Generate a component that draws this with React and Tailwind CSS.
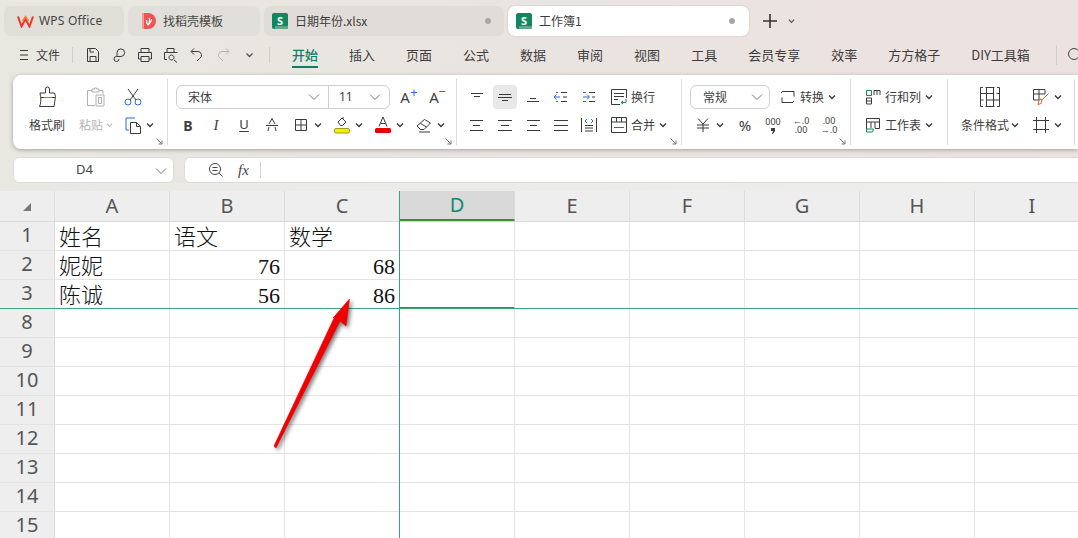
import React from "react";

const D = "#3a3a3a";
const Svg = ({ w = 16, h = 16, vb, children, className = "" }) => (
  <svg width={w} height={h} viewBox={vb || `0 0 ${w} ${h}`} fill="none" stroke={D} strokeWidth="1" className={`shrink-0 ${className}`}>
    {children}
  </svg>
);
const Chev = ({ c = D, w = 8 }) => (
  <svg width={w} height="6" viewBox="0 0 8 6" fill="none" stroke={c} strokeWidth="1.4" className="shrink-0"><path d="M1 1.5 4 4.5 7 1.5" /></svg>
);
const ChevThin = () => (
  <svg width="12" height="8" viewBox="0 0 12 8" fill="none" stroke="#777" strokeWidth="1" className="shrink-0"><path d="M1 1.5 6 6.5 11 1.5" /></svg>
);
const Launcher = ({ c }) => (
  <svg width="7" height="7" viewBox="0 0 7 7" fill="none" stroke="#777" strokeWidth="1" className={`absolute bottom-[4px] ${c}`}><path d="M.5.5 6 6M6 2.5V6H2.5" /></svg>
);
const Divider = () => <div className="w-px bg-[#dcdcdc] my-[4px] shrink-0" />;

const Slot = ({ children, c = "w-[28px]" }) => <div className={`flex items-center justify-center h-[24px] shrink-0 ${c}`}>{children}</div>;
const IC = ({ children }) => <div className="flex items-center gap-[5px] h-[24px] shrink-0">{children}<Chev /></div>;
const Align = ({ rows }) => (
  <Svg>{rows.map(([a, b, y]) => <path key={y} d={`M${a} ${y}.5H${b}`} />)}</Svg>
);
const Row = ({ children, c = "" }) => <div className={`flex items-center h-[24px] whitespace-nowrap ${c}`}>{children}</div>;

const SheetTab = ({ title, active }) => (
  <div className={`relative flex items-center h-[30px] rounded-[7px] pl-[8px] shrink-0 ${active ? "w-[241px] bg-white shadow-[0_0_2px_rgba(0,0,0,0.2)]" : "w-[240px] bg-[#e2dcd8]"}`}>
    <div className="relative w-[16px] h-[16px] rounded-[2px] bg-[#12875f] text-white text-[11px] font-bold flex items-center justify-center overflow-hidden font-['Noto_Sans',sans-serif]">
      S<div className="absolute left-[3px] right-0 bottom-0 h-[3px] bg-[#5aa98c]" />
    </div>
    <span className="ml-[7px] text-[12px] text-[#3d3d3d]">{title}</span>
    <div className={`absolute top-[12px] w-[6px] h-[6px] rounded-full bg-[#a6a6a6] ${active ? "right-[14px]" : "right-[13px]"}`} />
  </div>
);

const menus = ["插入", "页面", "公式", "数据", "审阅", "视图", "工具", "会员专享", "效率", "方方格子", "DIY工具箱"];
const cols = ["A", "B", "C", "D", "E", "F", "G", "H", "I"];
const rows = [
  ["1", "姓名", "语文", "数学"],
  ["2", "妮妮", "76", "68"],
  ["3", "陈诚", "56", "86"],
  ["8"], ["9"], ["10"], ["11"], ["12"], ["13"], ["14"], ["15"],
];

export default function App() {
  return (
    <div className="relative w-[1078px] h-[538px] overflow-hidden bg-gradient-to-r from-[#e8e8e1] via-[#eae4e0] to-[#ece2e0] text-[#333] font-['Noto_Sans_CJK_SC','Noto_Sans',sans-serif]">
      {/* tabs */}
      <div className="flex items-center gap-[4px] pl-[4px] pt-[6px] h-[36px]">
        <div className="flex items-center w-[120px] h-[30px] rounded-[7px] bg-[#dfdfd8] pl-[13px] shrink-0">
          <svg width="17" height="13" viewBox="0 0 17 13" fill="none" className="shrink-0"><path d="M1 1.500 4.500 11.500 8.500 4 12.500 11.500 16 1.500" stroke="#f0342a" strokeWidth="2" /><path d="M5.500 6 8.500 1.500 11.500 6" stroke="#fb7a2c" strokeWidth="1.500" /></svg>
          <span className="ml-[5px] text-[12px] text-[#444] font-['Noto_Sans',sans-serif] tracking-[0.2px]">WPS Office</span>
        </div>
        <div className="flex items-center w-[132px] h-[30px] rounded-[7px] bg-[#e0dfd9] pl-[14px] shrink-0">
          <svg width="14" height="16" viewBox="0 0 14 16" className="shrink-0"><path d="M0 0h6a8 8 0 0 1 0 16H0z" fill="#ef5454" /><path d="M0 0h2v16H0z" fill="#f59a8e" /><path d="M7 5c1 2 1 4-1 7M9.500 6C9.500 8 8 10 6 12M4.500 7C4.500 9 5 11 6 12" stroke="#fff" strokeWidth="1.200" fill="none" /></svg>
          <span className="ml-[7px] text-[12px] text-[#444]">找稻壳模板</span>
        </div>
        <SheetTab title="日期年份.xlsx" />
        <SheetTab title="工作簿1" active />
        <svg width="16" height="16" viewBox="0 0 16 16" stroke="#333" strokeWidth="1.600" className="ml-[9px] shrink-0"><path d="M1 8h14M8 1v14" /></svg>
        <div className="ml-[6px]"><Chev c="#555" w={7} /></div>
      </div>

      {/* menu */}
      <div className="flex items-center h-[39px] pb-[1px] text-[13px] text-[#3d3d3d] whitespace-nowrap">
        <Svg w={10} h={12} className="ml-[19px]"><path d="M1 1.500h8M1 6h8M1 10.500h8" /></Svg>
        <span className="ml-[7px] text-[12px] shrink-0">文件</span>
        <div className="ml-[12px] w-px h-[16px] bg-[#cfcfc9] shrink-0" />
        <div className="flex items-center shrink-0">
          <Slot c="w-[26px] ml-[7px]"><Svg><path d="M2.500 1.500h8l3 3v10h-11zM5 14v-4.500h6V14M5 1.500V5h4" /></Svg></Slot>
          <Slot c="w-[26px]"><Svg><path d="M6 9V5.500a3.800 3.800 0 1 1 4 4H5.500a2.500 2.500 0 1 0 2.500 2.500" /></Svg></Slot>
          <Slot c="w-[26px]"><Svg><path d="M4 5V1.500h8V5M4 12H1.500V5.500h13V12H12M4 9.500h8v5H4z" /></Svg></Slot>
          <Slot c="w-[26px]"><Svg><path d="M4 5V1.500h7V5M4 12.500H1.500v-7h13M8.500 8a2.500 2.500 0 1 0 .01 0zM11 13l3 2.500" /></Svg></Slot>
          <Slot c="w-[26px]"><Svg><path d="M5 1.500 2 4.500l3 3M2.500 4.500H9a3.700 3.700 0 0 1 1.500 7L8 14" /></Svg></Slot>
          <Slot c="w-[26px]"><Svg className="opacity-30"><path d="M11 1.500l3 3-3 3M13.500 4.500H7a3.700 3.700 0 0 0-1.500 7L8 14" /></Svg></Slot>
          <Slot c="w-[26px]"><Chev c="#555" w={9} /></Slot>
        </div>
        <div className="ml-[7px] w-px h-[16px] bg-[#cfcfc9] shrink-0" />
        <div className="ml-[22px] relative text-[#0f7d69] font-medium shrink-0">
          开始
          <div className="absolute left-0 right-0 -bottom-[3px] h-[2px] bg-[#0f7d69]" />
        </div>
        <div className="flex ml-[31px] gap-[31px] shrink-0">
          {menus.map((m) => <span key={m}>{m}</span>)}
        </div>
        <div className="ml-[26px] w-px h-[20px] bg-[#cfcfc9] shrink-0" />
        <svg width="16" height="16" viewBox="0 0 16 16" fill="none" stroke="#444" className="ml-[10px] shrink-0"><circle cx="7" cy="7" r="5.500" /></svg>
      </div>

      {/* ribbon */}
      <div className="flex ml-[13px] h-[74px] rounded-l-[8px] bg-white shadow-[0_1px_4px_rgba(0,0,0,0.3)] text-[12px] text-[#3d3d3d]">
        {/* clipboard */}
        <div className="relative w-[154px] shrink-0 flex pt-[10px] pl-[13px]">
          <div className="w-[42px] flex flex-col items-center gap-[4px]">
            <Slot c="w-[42px]"><Svg w={20} h={22}><path d="M8.500 7V3a2 2 0 0 1 4 0V7H17.500l1 3.500-1.500 10H2.500c1.500-3 1.500-7 1-10L3 7z" /><path d="M4 11.500h14" /><path d="M7 11.500h8" stroke="#d9622b" /></Svg></Slot>
            <Row>格式刷</Row>
          </div>
          <div className="ml-[8px] w-[40px] flex flex-col items-center gap-[4px] text-[#b5b5b5]">
            <Slot c="w-[40px]"><Svg w={20} h={20} className="opacity-40"><path d="M6 3.500H1.500v15H9M13 3.500h4V7M6 5V2h2.500V1h2v1H13v3zM10 8h8v11h-8zM12.500 10.500h3v6h-3z" /></Svg></Slot>
            <Row c="gap-[3px]">粘贴<Chev c="#bbb" w={7} /></Row>
          </div>
          <div className="ml-[6px] w-[34px] flex flex-col gap-[4px]">
            <Slot c="w-[20px] ml-[1px]"><Svg w={18} h={18}><path d="M4 1 12 12M14 1 6 12" /><circle cx="4" cy="14" r="3" stroke="#2f66d8" /><circle cx="14" cy="14" r="3" stroke="#2f66d8" /></Svg></Slot>
            <div className="flex items-center gap-[4px] h-[24px] ml-[3px]">
              <Svg w={17} h={17}><path d="M10 1H1v12h3" stroke="#2f66d8" /><path d="M5.500 5.500h6l4 4v7h-10zM11.500 5.500v4h4" /></Svg>
              <Chev />
            </div>
          </div>
          <Launcher c="right-[4px]" />
        </div>
        <Divider />
        {/* font */}
        <div className="relative w-[288px] shrink-0 pt-[10px] flex flex-col gap-[4px]">
          <Row c="pl-[8px]">
            <div className="flex w-[214px] h-[24px] rounded-[6px] border border-[#cfcfcf] shrink-0">
              <div className="flex items-center justify-between w-[152px] pl-[11px] pr-[8px] border-r border-[#cfcfcf]">宋体<ChevThin /></div>
              <div className="flex items-center justify-between flex-1 pl-[10px] pr-[8px] font-['Noto_Sans',sans-serif]">11<ChevThin /></div>
            </div>
            <Slot c="w-[29px] ml-[3px]"><span className="relative text-[15px] font-['Noto_Sans',sans-serif] pr-[5px]">A<span className="absolute -top-[3px] right-[-3px] text-[13px] text-[#2f66d8]">+</span></span></Slot>
            <Slot c="w-[29px]"><span className="relative text-[15px] font-['Noto_Sans',sans-serif] pr-[5px]">A<span className="absolute -top-[4px] right-[-2px] text-[13px] text-[#2f66d8]">−</span></span></Slot>
          </Row>
          <Row c="pl-[6px]">
            <Slot><span className="font-['Noto_Sans',sans-serif] font-bold text-[14px]">B</span></Slot>
            <Slot><span className="font-['Liberation_Serif',serif] italic text-[15px]">I</span></Slot>
            <Slot><span className="font-['Noto_Sans',sans-serif] text-[13px] underline underline-offset-2">U</span></Slot>
            <Slot><Svg><path d="M5 7 8 1.500 11 7M2 8.500h12M5 10l-1 4M11 10l1 4" /></Svg></Slot>
            <div className="ml-[7px] flex gap-[12px]">
              <IC><Svg><path d="M2.500 2.500h11v11h-11zM8 2.500v11M2.500 8h11" /></Svg></IC>
              <IC>
                <svg width="16" height="18" viewBox="0 0 16 18" fill="none" stroke={D} className="shrink-0"><path d="M4 6 8 2l4 4-3.500 3.500h-2z" /><path d="M9 3V1" /><rect x=".5" y="12.500" width="15" height="4.500" rx="1.500" fill="#f4f000" stroke="#9aa020" /></svg>
              </IC>
              <IC>
                <svg width="16" height="18" viewBox="0 0 16 18" fill="none" stroke={D} className="shrink-0"><path d="M4 10.500 8 1l4 9.500M5.500 7.500h5" /><rect x="0" y="12" width="16" height="5" rx="1.500" fill="#ee0000" stroke="none" /></svg>
              </IC>
              <IC>
                <svg width="16" height="16" viewBox="0 0 16 16" fill="none" stroke={D} className="shrink-0"><path d="M1 9 8.500 2.500l6 3.500L8 12.500H4.500zM4.500 6.500 10.500 10M3 15h11" /></svg>
              </IC>
            </div>
          </Row>
          <Launcher c="right-[4px]" />
        </div>
        <Divider />
        {/* alignment */}
        <div className="relative w-[224px] shrink-0 pt-[10px] pl-[6px] flex flex-col gap-[4px]">
          <Row>
            <Slot><Align rows={[[2, 14, 4], [5, 11, 7]]} /></Slot>
            <Slot><div className="w-[24px] h-[24px] rounded-[4px] bg-[#e8e8e8] flex items-center justify-center"><Align rows={[[2, 14, 5], [1, 15, 8], [5, 11, 11]]} /></div></Slot>
            <Slot><Align rows={[[5, 11, 9], [2, 14, 12]]} /></Slot>
            <Slot><Svg><path d="M1 8h6M3.500 5.500 1 8l2.500 2.500M3 3.500h2M3 12.500h2" stroke="#2f66d8" /><path d="M8 3.500h6M8 12.500h6M10 8h4" /></Svg></Slot>
            <Slot><Svg><path d="M2 8h6M6 5.500 8.500 8 6 10.500M2 3.500h3M2 12.500h3" stroke="#2f66d8" /><path d="M8 3.500h6M8 12.500h6M11 8h3" /></Svg></Slot>
            <div className="ml-[8px]">
              <svg width="16" height="16" viewBox="0 0 16 16" fill="none" stroke={D} className="shrink-0"><path d="M15.500 9V.5H.5v15H9M3 4.500h10M3 7.500h10M3 10.500h4" /><path d="M15 10v3.500h-4.500M12 12l-2 1.500L12 15" stroke="#12875f" /></svg>
            </div>
            <span className="ml-[4px]">换行</span>
          </Row>
          <Row>
            <Slot><Align rows={[[1, 14, 3], [4, 11, 8], [1, 14, 13]]} /></Slot>
            <Slot><Align rows={[[1, 15, 3], [4, 12, 8], [1, 15, 13]]} /></Slot>
            <Slot><Align rows={[[2, 15, 3], [5, 12, 8], [2, 15, 13]]} /></Slot>
            <Slot><Align rows={[[1, 15, 3], [1, 15, 8], [1, 15, 13]]} /></Slot>
            <Slot><Svg><path d="M.5 1v14M15.500 1v14M4 8.500h8M4 11h8M4 14h8" /><path d="M6 2 4 4l2 2M10 2l2 2-2 2" stroke="#2f66d8" /></Svg></Slot>
            <div className="ml-[8px]">
              <svg width="16" height="16" viewBox="0 0 16 16" fill="none" stroke={D} className="shrink-0"><path d="M.5.500h15v15H.5zM.5 5h15M5.500.500V5M10.500.500V5" /><path d="M3 10.500h10" stroke="#12875f" /></svg>
            </div>
            <span className="ml-[4px]">合并</span>
            <div className="ml-[4px]"><Chev /></div>
          </Row>
          <Launcher c="right-[4px]" />
        </div>
        <Divider />
        {/* number */}
        <div className="relative w-[168px] shrink-0 pt-[10px] flex flex-col gap-[4px]">
          <Row c="pl-[8px]">
            <div className="flex items-center justify-between w-[80px] h-[24px] rounded-[6px] border border-[#cfcfcf] pl-[12px] pr-[6px] shrink-0">常规<ChevThin /></div>
            <div className="ml-[10px]"><Svg><path d="M3 2.500h11v5M13 13.500H2v-5M1 4l2-2M14 12l-2 2" /></Svg></div>
            <span className="ml-[4px]">转换</span>
            <div className="ml-[4px]"><Chev /></div>
          </Row>
          <Row c="pl-[13px]">
            <IC><Svg><path d="M3 1.500 8 7l5-5.500M2 8h12M2 11h12M8 7v8" /></Svg></IC>
            <div className="ml-[7px] flex">
              <Slot><span className="text-[15px] font-['Noto_Sans',sans-serif]">%</span></Slot>
              <Slot>
                <div className="flex flex-col items-center">
                  <span className="text-[9px] leading-[10px] font-['Noto_Sans',sans-serif]">000</span>
                  <svg width="4" height="6" viewBox="0 0 4 6" className="mt-[1px] shrink-0"><path d="M0 0h4v3L2 6H1l1-3H0z" fill={D} /></svg>
                </div>
              </Slot>
              <Slot><span className="whitespace-pre text-center text-[9px] leading-[9px] font-['Noto_Sans',sans-serif]">{"←.0\n.00"}</span></Slot>
              <Slot><span className="whitespace-pre text-center text-[9px] leading-[9px] font-['Noto_Sans',sans-serif]">{".00\n→.0"}</span></Slot>
            </div>
          </Row>
          <Launcher c="right-[4px]" />
        </div>
        <Divider />
        {/* rows cols */}
        <div className="w-[96px] shrink-0 pt-[10px] pl-[14px] flex flex-col gap-[4px]">
          <Row>
            <Svg><path d="M1.500 1.500h5v5h-5z" stroke="#12875f" /><path d="M1.500 9h5v6h-5zM1.500 12h5M9 6V1.500h6V6M12 1.500V6" /></Svg>
            <span className="ml-[4px]">行和列</span>
            <div className="ml-[4px]"><Chev /></div>
          </Row>
          <Row>
            <Svg><path d="M1.500 12V1.500h13v10H10M1.500 5h13M6 5v6M10 5v6" /><path d="M1.500 12h7l-1 3h-6z" stroke="#12875f" /></Svg>
            <span className="ml-[4px]">工作表</span>
            <div className="ml-[4px]"><Chev /></div>
          </Row>
        </div>
        <Divider />
        {/* styles */}
        <div className="w-[126px] shrink-0 pt-[10px] pl-[13px] flex">
          <div className="w-[58px] flex flex-col items-center gap-[4px]">
            <Slot c="w-[58px]"><Svg w={20} h={20}><path d="M3 .5H.5v19H3M17 .5h2.500v19H17M5.500 .5h9M5.500 19.500h9M.5 6.500h13M6.500 13h13M.5 13h3M16.500 6.500h3M6.500 .5v19M13.500 .5v19" /></Svg></Slot>
            <Row>条件格式<div className="ml-[2px]"><Chev /></div></Row>
          </div>
          <div className="ml-[14px] flex flex-col gap-[4px]">
            <IC>
              <svg width="16" height="17" viewBox="0 0 16 17" fill="none" stroke={D} className="shrink-0"><path d="M6 11H.5V.5H12V5M.5 5H12M6 .5V11" /><path d="M15.500 4.500 9 11l-1.500-1M9 11l-1 3.500-3 1 1-4 2-1.500" stroke="#d9622b" /></svg>
            </IC>
            <IC><Svg><path d="M3.500 0v16M12.500 0v16M0 3.500h16M0 12.500h16" /></Svg></IC>
          </div>
        </div>
        <Divider />
      </div>

      {/* formula bar */}
      <div className="flex gap-[10px] ml-[13px] mt-[8px] h-[26px]">
        <div className="relative w-[161px] rounded-[6px] bg-white border border-[#dcdcdc] flex items-center justify-center text-[13px] font-['Noto_Sans',sans-serif] pr-[18px] text-[#444]">
          D4
          <div className="absolute right-[6px] top-[9px]"><ChevThin /></div>
        </div>
        <div className="flex-1 rounded-l-[6px] bg-white border border-r-0 border-[#dcdcdc] flex items-center">
          <svg width="16" height="16" viewBox="0 0 16 16" fill="none" stroke="#444" className="ml-[23px] shrink-0"><circle cx="7" cy="7" r="5.500" /><path d="M4.500 8.500h5M4.500 5.500h5M11 11l3.500 3.500" /></svg>
          <span className="ml-[14px] font-['Liberation_Serif',serif] italic text-[15px] text-[#444]">fx</span>
          <div className="ml-[11px] w-px h-[16px] bg-[#d5d5d5]" />
        </div>
      </div>

      {/* grid */}
      <div className="pt-[8px] bg-gradient-to-r from-[#e9e9e4] to-[#eeeeee]">
        <div className="bg-white">
          <div className="flex h-[31px] bg-[#eeeeee] border-b border-[#dadada] font-['Noto_Sans',sans-serif] text-[20px] text-[#555]">
            <div className="w-[55px] shrink-0 border-r border-[#e0e0e0] flex items-center justify-center pt-[2px]">
              <svg width="10" height="10" viewBox="0 0 10 10" className="shrink-0"><path d="M9 1v8H1z" fill="#777" /></svg>
            </div>
            {cols.map((c) => (
              <div key={c} className={`relative w-[115px] shrink-0 flex items-center justify-center border-r border-[#dcdcdc] ${c === "D" ? "bg-[#d9d9d9] text-[#0f8a72] border-b-2 border-b-[#3c8f2c]" : ""}`}>{c}</div>
            ))}
          </div>
          {rows.map((r, i) => (
            <div key={r[0]} className="flex h-[29px] border-b border-[#e3e3e3]">
              <div className="w-[55px] shrink-0 bg-[#eeeeee] border-r border-[#d9d9d9] flex items-center justify-center font-['Noto_Sans',sans-serif] text-[20px] text-[#555] pb-[2px]">{r[0]}</div>
              {cols.map((c, j) => {
                const v = r[j + 1];
                const num = v && /^\d+$/.test(v);
                return (
                  <div key={c} className={`w-[115px] shrink-0 border-r border-[#e6e6e6] flex items-center h-[29px] pt-[2px] font-['Liberation_Serif','Noto_Sans_CJK_SC',serif] text-[22px] font-light text-[#111] ${num ? "justify-end pr-[4px]" : "pl-[4px]"} ${c === "D" && i === 2 ? "border-b-2 border-b-[#3c8f2c]" : ""}`}>{v}</div>
                );
              })}
            </div>
          ))}
        </div>
      </div>

      {/* frozen pane lines */}
      <div className="absolute left-0 right-0 top-[308px] h-px bg-[#3aa87c]" />
      <div className="absolute left-[399px] top-[191px] bottom-0 w-px bg-[#3a9f85]" />

      {/* annotation arrow */}
      <svg width="1078" height="538" viewBox="0 0 1078 538" className="absolute inset-0 pointer-events-none drop-shadow-[2px_2px_2px_rgba(0,0,0,0.55)]">
        <path d="M349.500 299 346 326 340 321 276 448 274 446 335 316 333 318z" fill="#f00000" stroke="#f00000" strokeWidth="0.600" strokeLinejoin="round" />
      </svg>
    </div>
  );
}
